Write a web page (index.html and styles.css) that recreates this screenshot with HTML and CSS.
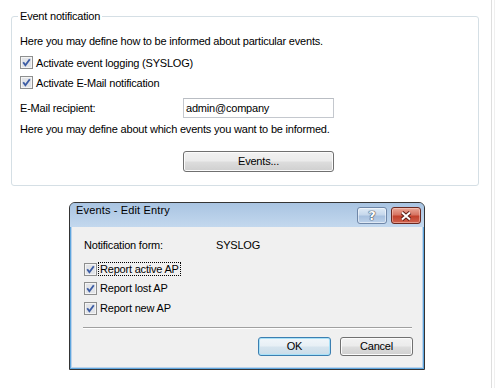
FILE: index.html
```html
<!DOCTYPE html>
<html>
<head>
<meta charset="utf-8">
<link rel="stylesheet" href="styles.css">
</head>
<body>
<div class="page">
  <div class="content">
    <fieldset class="group">
      <legend>Event notification</legend>
      <p class="line intro">Here you may define how to be informed about particular events.</p>
      <div class="check-row first">
        <svg class="cb" width="13" height="13" viewBox="0 0 13 13"><rect x="0.5" y="0.5" width="12" height="12" fill="#f6f6f6" stroke="#8e8f8f"/><rect x="1.5" y="1.5" width="10" height="10" fill="#e2e4e8" stroke="#f4f4f4"/><path d="M3.2 6.2 L5.4 9.2 L9.8 3.2" stroke="#3d5da4" stroke-width="1.9" fill="none"/></svg>
        <span>Activate event logging (SYSLOG)</span>
      </div>
      <div class="check-row">
        <svg class="cb" width="13" height="13" viewBox="0 0 13 13"><rect x="0.5" y="0.5" width="12" height="12" fill="#f6f6f6" stroke="#8e8f8f"/><rect x="1.5" y="1.5" width="10" height="10" fill="#e2e4e8" stroke="#f4f4f4"/><path d="M3.2 6.2 L5.4 9.2 L9.8 3.2" stroke="#3d5da4" stroke-width="1.9" fill="none"/></svg>
        <span>Activate E-Mail notification</span>
      </div>
      <div class="field-row">
        <span class="field-label">E-Mail recipient:</span>
        <div class="input">admin@company</div>
      </div>
      <p class="line second">Here you may define about which events you want to be informed.</p>
      <div class="button-row"><button class="btn events">Events...</button></div>
    </fieldset>

    <div class="dialog">
      <div class="titlebar">
        <span class="title">Events - Edit Entry</span>
        <div class="caption-btns">
          <span class="cap help">?</span>
          <span class="cap close"><svg width="14" height="10" viewBox="0 0 14 10"><path d="M3 1.5 L11 8.5 M11 1.5 L3 8.5" stroke="#5a1d16" stroke-width="4" fill="none"/><path d="M3 1.5 L11 8.5 M11 1.5 L3 8.5" stroke="#ffffff" stroke-width="2" fill="none"/></svg></span>
        </div>
      </div>
      <div class="dialog-body">
        <div class="info-row"><span class="info-label">Notification form:</span><span>SYSLOG</span></div>
        <div class="dlg-check first">
          <svg class="cb" width="13" height="13" viewBox="0 0 13 13"><rect x="0.5" y="0.5" width="12" height="12" fill="#f6f6f6" stroke="#8e8f8f"/><rect x="1.5" y="1.5" width="10" height="10" fill="#e2e4e8" stroke="#f4f4f4"/><path d="M3.2 6.2 L5.4 9.2 L9.8 3.2" stroke="#3d5da4" stroke-width="1.9" fill="none"/></svg>
          <span class="dlg-label focus">Report active AP</span>
        </div>
        <div class="dlg-check second">
          <svg class="cb" width="13" height="13" viewBox="0 0 13 13"><rect x="0.5" y="0.5" width="12" height="12" fill="#f6f6f6" stroke="#8e8f8f"/><rect x="1.5" y="1.5" width="10" height="10" fill="#e2e4e8" stroke="#f4f4f4"/><path d="M3.2 6.2 L5.4 9.2 L9.8 3.2" stroke="#3d5da4" stroke-width="1.9" fill="none"/></svg>
          <span class="dlg-label">Report lost AP</span>
        </div>
        <div class="dlg-check third">
          <svg class="cb" width="13" height="13" viewBox="0 0 13 13"><rect x="0.5" y="0.5" width="12" height="12" fill="#f6f6f6" stroke="#8e8f8f"/><rect x="1.5" y="1.5" width="10" height="10" fill="#e2e4e8" stroke="#f4f4f4"/><path d="M3.2 6.2 L5.4 9.2 L9.8 3.2" stroke="#3d5da4" stroke-width="1.9" fill="none"/></svg>
          <span class="dlg-label">Report new AP</span>
        </div>
        <div class="separator"></div>
        <div class="dlg-buttons">
          <button class="btn dlg-btn default">OK</button>
          <button class="btn dlg-btn">Cancel</button>
        </div>
      </div>
    </div>
  </div>
  <div class="edge"></div>
</div>
</body>
</html>
```

FILE: styles.css
```css
* { box-sizing: border-box; }

body {
  margin: 0;
  background: #ffffff;
  color: #000000;
  font: 11px/13px "Liberation Sans", Arial, sans-serif;
  letter-spacing: -0.2px;
}

.page {
  display: flex;
  width: 495px;
  height: 388px;
  overflow: hidden;
}

.content {
  width: 491px;
  padding: 10px 0 0 11px;
}

.edge {
  width: 4px;
  border-left: 1px solid #dedede;
  border-right: 1px solid #efefef;
}

/* group box */
.group {
  margin: 0;
  width: 468px;
  min-width: 0;
  border: 1px solid #d5dfe5;
  border-radius: 3px;
  padding: 0 8px 13px 8px;
}

.group legend {
  margin-left: -2px;
  padding: 0 2px;
  line-height: 13px;
}

.line {
  margin: 0;
  height: 13px;
  white-space: nowrap;
}

.intro { margin-top: 12px; }
.second { margin-top: 5px; }

.check-row {
  display: flex;
  align-items: flex-start;
  gap: 3px;
  height: 14px;
  line-height: 14px;
  margin-top: 6px;
}
.check-row.first { margin-top: 8px; }

.cb { flex: none; display: block; }

.field-row {
  display: flex;
  align-items: center;
  height: 20px;
  margin-top: 8px;
}

.field-label { width: 163px; flex: none; }

.input {
  width: 151px;
  height: 20px;
  border: 1px solid #c4c8ce;
  border-top-color: #b9bdc3;
  padding: 0 2px;
  line-height: 18px;
  background: #fff;
}

.button-row {
  padding-left: 163px;
  margin-top: 15px;
}

.btn {
  display: block;
  padding: 0;
  margin: 0;
  font: 11px/13px "Liberation Sans", Arial, sans-serif;
  letter-spacing: -0.2px;
  color: #000;
  border: 1px solid #707070;
  border-radius: 3px;
  background: linear-gradient(#f2f2f2 0%, #ebebeb 48%, #dddddd 52%, #cfcfcf 100%);
  box-shadow: inset 0 0 0 1px #fbfbfb;
  text-align: center;
}

.btn.events {
  width: 151px;
  height: 21px;
}

/* dialog window */
.dialog {
  margin: 16px 0 0 58px;
  width: 356px;
  border: 1px solid #343434;
  border-radius: 6px 6px 0 0;
  background: #bcd3eb;
  box-shadow: inset 0 0 0 1px #5fa6de;
  padding: 0 2px 2px 2px;
}

.titlebar {
  display: flex;
  justify-content: space-between;
  align-items: flex-start;
  height: 24px;
  margin: 0 -2px;
  padding: 1px 3px 0 6px;
  border-radius: 5px 5px 0 0;
  background: linear-gradient(#a9c4e2, #c3d8ee);
}

.title {
  line-height: 13px;
  letter-spacing: 0.15px;
  color: #000;
}

.caption-btns {
  display: flex;
  gap: 4px;
  margin-top: 3px;
}

.cap {
  width: 30px;
  height: 17px;
  border-radius: 3px;
  display: flex;
  align-items: center;
  justify-content: center;
}

.cap.help {
  border: 1px solid #6f87a8;
  background: linear-gradient(#e0ebf6 0%, #c6d8ec 45%, #a8c1df 55%, #bdd2ea 100%);
  box-shadow: inset 0 0 0 1px rgba(255,255,255,0.5);
  color: #ffffff;
  font: bold 13px/15px "DejaVu Sans", sans-serif;
  letter-spacing: 0;
  text-shadow: 0 0 1px #2d3b4f, 0 0 1px #2d3b4f, 0 0 1px #2d3b4f;
}

.cap.close {
  border: 1px solid #6a2820;
  background: linear-gradient(#e9a898 0%, #d77563 45%, #c2412c 55%, #d0634f 100%);
  box-shadow: inset 0 0 0 1px rgba(255,220,210,0.45);
}
.cap.close svg { display: block; }

.dialog-body {
  background: #f0f0f0;
  padding: 12px 9px 11px 12px;
}

.info-row {
  display: flex;
  height: 13px;
}
.info-label { width: 132px; flex: none; }

.dlg-check {
  display: flex;
  align-items: flex-start;
  gap: 1px;
  height: 14px;
}
.dlg-check .cb { margin-top: 1px; }
.dlg-check.first { margin-top: 10px; }
.dlg-check.second { margin-top: 5px; }
.dlg-check.third { margin-top: 6px; }

.dlg-label {
  border: 1px dotted transparent;
  padding: 0 1px;
  line-height: 12px;
}
.dlg-label.focus { border-color: #000; }

.separator {
  margin: 12px 1px 0 -1px;
  border-top: 1px solid #a0a0a0;
  border-bottom: 1px solid #ffffff;
}

.dlg-buttons {
  display: flex;
  justify-content: flex-end;
  gap: 9px;
  margin-top: 8px;
}

.dlg-btn {
  width: 73px;
  height: 19px;
}

.dlg-btn.default {
  border-color: #3c7fb1;
  background: linear-gradient(#f1f6fa 0%, #e7eff5 48%, #d6e4ee 52%, #cadce9 100%);
  box-shadow: inset 0 0 0 1px #a8e1f8;
}
```
